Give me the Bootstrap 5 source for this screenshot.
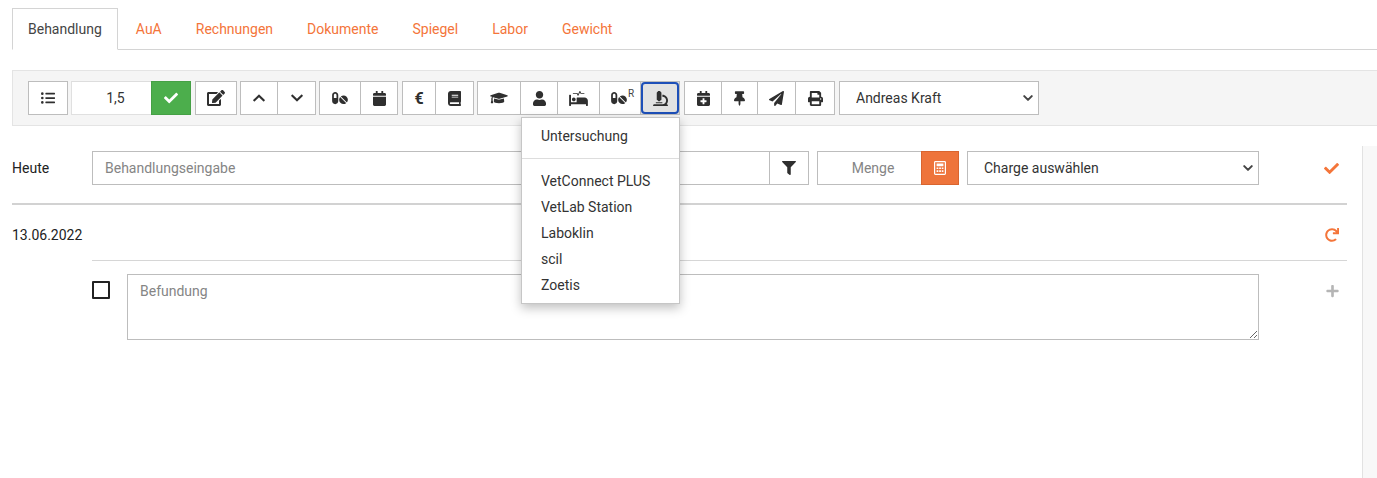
<!DOCTYPE html>
<html lang="de">
<head>
<meta charset="UTF-8">
<meta name="viewport" content="width=device-width, initial-scale=1.0">
<title>Behandlung</title>
<link href="https://cdn.jsdelivr.net/npm/bootstrap@5.3.3/dist/css/bootstrap.min.css" rel="stylesheet">
<style>
body { font-family: Roboto, "Liberation Sans", sans-serif; font-size: 14px; color: #333; overflow: hidden; background: #fff; }
svg { fill: currentColor; display: block; }
.page-wrap { height: 478px; display: flex; flex-direction: column; padding-left: 12px; padding-top: 8px; }

.nav-tabs { border-bottom: 1px solid #d4d4d4; height: 42px; }
.nav-tabs .nav-link { color: #f4753a; padding: 0 16px; line-height: 41px; height: 42px; border-radius: 0; border: 1px solid transparent; margin: 0; }
.nav-tabs .nav-link.active { color: #444; border-color: #d4d4d4 #d4d4d4 #fff; padding: 0 15px; margin-right: 1px; }

.tool-panel { margin-top: 20px; height: 56px; background: #f5f5f5; border: 1px solid #e4e4e4; border-right: 0; padding: 10px 15px; display: flex; gap: 3px; }
.tb-btn { height: 34px; padding: 0; border: 1px solid #bdbdbd; border-radius: 0 !important; background: #fff; color: #2f2f2f; display: flex; align-items: center; justify-content: center; }
.tb-btn:hover { background: #fff; border-color: #bdbdbd; color: #2f2f2f; }
.btn-group .tb-btn { flex: none; }
.tb-btn.is-open { background: #e2e2e2; position: relative; z-index: 2; }
.tb-btn.is-open::after { content: ""; position: absolute; inset: 0; border: 2px solid #1d4fb8; border-radius: 4px; }
.input-group > .tb-amount { width: 81px; height: 34px; text-align: center; border: 1px solid #e0e0e0; border-top-color: #ddd; border-radius: 0; font-size: 14px; padding: 0 0 0 8px; color: #333; flex: none; }
.tb-ok { width: 40px; height: 34px; background: #4cae4c; border: 1px solid #45a045; color: #fff; border-radius: 0; padding: 0; display: flex; align-items: center; justify-content: center; }
.tb-ok:hover { background: #4cae4c; border-color: #45a045; color: #fff; }
.ms-1px { margin-left: 1px; }
.sel-plain { height: 34px; border: 1px solid #bdbdbd; border-radius: 0; font-size: 14px; color: #333; padding: 0 28px 0 16px; background-image: url("data:image/svg+xml,%3csvg xmlns='http://www.w3.org/2000/svg' viewBox='0 0 16 16'%3e%3cpath fill='none' stroke='%23444' stroke-linecap='round' stroke-linejoin='round' stroke-width='3.2' d='m2 5 6 6 6-6'/%3e%3c/svg%3e"); background-size: 10px 10px; background-position: right 5px center; }
.sel-doctor { width: 200px; margin-left: 1px; }

.lab-menu-anchor { position: relative; }
.lab-menu { display: block; position: absolute; top: 36px; left: -120px; margin: 0; width: 159px; padding: 5px 0 5px; min-width: 0; border: 1px solid #c6c6c6; border-radius: 0; box-shadow: 0 4px 10px rgba(0,0,0,.25); font-size: 14px; z-index: 5; }
.lab-menu .dropdown-item { padding: 0 19px; line-height: 26px; color: #333; }
.lab-menu .dropdown-divider { margin: 9px 0 9px; border-color: #ddd; opacity: 1; }

.body-split { flex: 1; display: flex; min-height: 0; margin-top: 20px; gap: 15px; }
.content-col { width: 1335px; padding-top: 5px; }
.side-strip { width: 15px; background: #f8f8f8; border-left: 1px solid #e2e2e2; }

.entry-row { display: flex; align-items: center; height: 34px; }
.day-label { width: 80px; flex: none; color: #222; }
.field-plain { height: 34px; border: 1px solid #bdbdbd; border-radius: 0; font-size: 14px; padding: 0 12px; color: #333; }
.field-plain::placeholder, .note-area::placeholder { color: #858585; opacity: 1; }
.entry-main { width: 717px; flex: none; }
.entry-qty { width: 142px; flex: none; margin-left: 8px; }
.input-group > .qty-input { text-align: center; width: 105px; flex: none; border-right: 0; padding-left: 18px; }
.calc-btn { width: 38px; height: 34px; background: #ee743b; border: 1px solid #d9652f; border-radius: 0; color: #fff; padding: 0; display: flex; align-items: center; justify-content: center; }
.calc-btn:hover { background: #ee743b; border-color: #d9652f; color: #fff; }
.sel-charge { width: 292px; margin-left: 8px; flex: none; }
.filter-btn { width: 40px; margin-left: -1px; }
.row-icon { flex: 1; display: flex; justify-content: flex-end; padding-right: 8px; color: #f4753a; }
.row-icon.muted-icon { color: #b5b5b5; }

.thick-rule { height: 2px; margin: 18px 0 0; background: #d2d2d2; }
.date-row { display: flex; align-items: center; height: 55px; padding-top: 5px; }
.date-label { color: #222; }
.thin-rule { height: 1px; margin-left: 80px; background: #d6d6d6; }
.note-row { display: flex; margin: 13px 0 0 80px; }
.form-check-input.note-check { width: 18px; height: 18px; margin: 7px 17px 0 0; border: 2px solid #222; border-radius: 1px; flex: none; }
.note-area { width: 1132px; height: 66px; flex: none; border: 1px solid #bdbdbd; border-radius: 0; font-size: 14px; padding: 6px 12px; color: #333; }
.note-area:focus, .field-plain:focus { box-shadow: none; border-color: #bdbdbd; }
.note-icon { padding-top: 10px; align-items: flex-start; }
.rx-btn { padding-left: 5px; }
.sup-r { font-size: 10px; line-height: 1; margin: -8px 0 0 1px; color: #444; }
.euro-sign { font-size: 16px; font-weight: 700; padding-top: 1px; }
</style>
</head>
<body>
<div class="page-wrap">
  <ul class="nav nav-tabs">
    <li class="nav-item"><a class="nav-link active" href="#">Behandlung</a></li>
    <li class="nav-item"><a class="nav-link" href="#">AuA</a></li>
    <li class="nav-item"><a class="nav-link" href="#">Rechnungen</a></li>
    <li class="nav-item"><a class="nav-link" href="#">Dokumente</a></li>
    <li class="nav-item"><a class="nav-link" href="#">Spiegel</a></li>
    <li class="nav-item"><a class="nav-link" href="#">Labor</a></li>
    <li class="nav-item"><a class="nav-link" href="#">Gewicht</a></li>
  </ul>

  <div class="tool-panel">
    <button class="btn tb-btn" style="width:40px" type="button" aria-label="Liste">
      <svg width="14" height="14" viewBox="0 0 512 512"><path d="M48 48a48 48 0 1 0 48 48 48 48 0 0 0-48-48zm0 160a48 48 0 1 0 48 48 48 48 0 0 0-48-48zm0 160a48 48 0 1 0 48 48 48 48 0 0 0-48-48zm448 16H176a16 16 0 0 0-16 16v32a16 16 0 0 0 16 16h320a16 16 0 0 0 16-16v-32a16 16 0 0 0-16-16zm0-320H176a16 16 0 0 0-16 16v32a16 16 0 0 0 16 16h320a16 16 0 0 0 16-16V80a16 16 0 0 0-16-16zm0 160H176a16 16 0 0 0-16 16v32a16 16 0 0 0 16 16h320a16 16 0 0 0 16-16v-32a16 16 0 0 0-16-16z"/></svg>
    </button>
    <div class="input-group w-auto flex-nowrap">
      <input class="form-control tb-amount" type="text" value="1,5">
      <button class="btn tb-ok" type="button" aria-label="OK" style="margin-left:-1px">
        <svg width="14" height="14" viewBox="0 0 512 512"><path d="M173.898 439.404l-166.4-166.4c-9.997-9.997-9.997-26.206 0-36.204l36.203-36.204c9.997-9.998 26.207-9.998 36.204 0L192 312.69 432.095 72.596c9.997-9.997 26.207-9.997 36.204 0l36.203 36.204c9.997 9.997 9.997 26.206 0 36.204l-294.4 294.401c-9.998 9.997-26.207 9.997-36.204-.001z"/></svg>
      </button>
    </div>
    <button class="btn tb-btn ms-1px" style="width:42px" type="button" aria-label="Bearbeiten">
      <svg width="18" height="16" viewBox="0 0 576 512"><path d="M402.6 83.2l90.2 90.2c3.8 3.8 3.8 10 0 13.8L274.4 405.6l-92.8 10.3c-12.4 1.4-22.9-9.1-21.5-21.5l10.3-92.8L388.8 83.2c3.8-3.8 10-3.8 13.8 0zm162-22.9l-48.8-48.8c-15.2-15.2-39.9-15.2-55.2 0l-35.4 35.4c-3.8 3.8-3.8 10 0 13.8l90.2 90.2c3.8 3.8 10 3.8 13.8 0l35.4-35.4c15.2-15.3 15.2-40 0-55.2zM384 346.2V448H64V128h229.8c3.2 0 6.2-1.3 8.5-3.5l40-40c7.6-7.6 2.2-20.5-8.5-20.5H48C21.5 64 0 85.5 0 112v352c0 26.5 21.5 48 48 48h352c26.5 0 48-21.5 48-48V306.2c0-10.7-12.9-16-20.5-8.5l-40 40c-2.2 2.3-3.5 5.3-3.5 8.5z"/></svg>
    </button>
    <div class="btn-group">
      <button class="btn tb-btn" style="width:38px" type="button" aria-label="Hoch">
        <svg width="12" height="14" viewBox="0 0 448 512"><path d="M240.971 130.524l194.343 194.343c9.373 9.373 9.373 24.569 0 33.941l-22.667 22.667c-9.357 9.357-24.522 9.375-33.901.04L224 227.495 69.255 381.516c-9.379 9.335-24.544 9.317-33.901-.04l-22.667-22.667c-9.373-9.373-9.373-24.569 0-33.941L207.03 130.525c9.372-9.373 24.568-9.373 33.941-.001z"/></svg>
      </button>
      <button class="btn tb-btn" style="width:39px" type="button" aria-label="Runter">
        <svg width="12" height="14" viewBox="0 0 448 512"><path d="M207.029 381.476L12.686 187.132c-9.373-9.373-9.373-24.569 0-33.941l22.667-22.667c9.357-9.357 24.522-9.375 33.901-.04L224 284.505l154.745-154.021c9.379-9.335 24.544-9.317 33.901.04l22.667 22.667c9.373 9.373 9.373 24.569 0 33.941L240.971 381.476c-9.373 9.372-24.569 9.372-33.942 0z"/></svg>
      </button>
    </div>
    <div class="btn-group">
      <button class="btn tb-btn" style="width:42px" type="button" aria-label="Medikamente">
        <svg width="16" height="14" viewBox="0 0 576 512"><path d="M112 32C50.1 32 0 82.1 0 144v224c0 61.9 50.1 112 112 112s112-50.1 112-112V144c0-61.9-50.1-112-112-112zm48 224H64V144c0-26.5 21.5-48 48-48s48 21.5 48 48v112zm139.7-29.7c-3.5-3.5-9.4-3.1-12.3.8-45.3 62.5-40.4 150.1 15.9 206.4 56.3 56.3 143.9 61.2 206.4 15.9 4-2.9 4.3-8.8.8-12.3L299.7 226.3zm229.8-19c-56.3-56.3-143.9-61.2-206.4-15.9-4 2.9-4.3 8.8-.8 12.3l210.8 210.8c3.5 3.5 9.4 3.1 12.3-.8 45.3-62.4 40.5-150.1-15.9-206.4z"/></svg>
      </button>
      <button class="btn tb-btn" style="width:38px" type="button" aria-label="Kalender">
        <svg width="13" height="15" viewBox="0 0 448 512"><path d="M12 192h424c6.6 0 12 5.4 12 12v260c0 26.5-21.5 48-48 48H48c-26.5 0-48-21.5-48-48V204c0-6.6 5.4-12 12-12zm436-44v-36c0-26.5-21.5-48-48-48h-48V12c0-6.6-5.4-12-12-12h-40c-6.6 0-12 5.4-12 12v52H160V12c0-6.6-5.4-12-12-12h-40c-6.6 0-12 5.4-12 12v52H48C21.5 64 0 85.5 0 112v36c0 6.6 5.4 12 12 12h424c6.6 0 12-5.4 12-12z"/></svg>
      </button>
    </div>
    <div class="btn-group ms-1px">
      <button class="btn tb-btn euro-sign" style="width:34px" type="button">€</button>
      <button class="btn tb-btn" style="width:39px" type="button" aria-label="Buch">
        <svg width="13" height="15" viewBox="0 0 448 512"><path d="M448 360V24c0-13.3-10.7-24-24-24H96C43 0 0 43 0 96v320c0 53 43 96 96 96h328c13.3 0 24-10.7 24-24v-16c0-7.5-3.5-14.3-8.9-18.7-4.2-15.4-4.2-59.3 0-74.7 5.4-4.3 8.9-11.1 8.9-18.6zM128 134c0-3.3 2.7-6 6-6h212c3.3 0 6 2.7 6 6v20c0 3.3-2.7 6-6 6H134c-3.3 0-6-2.7-6-6v-20zm0 64c0-3.3 2.7-6 6-6h212c3.3 0 6 2.7 6 6v20c0 3.3-2.7 6-6 6H134c-3.3 0-6-2.7-6-6v-20zm253.4 250H96c-17.7 0-32-14.3-32-32 0-17.6 14.4-32 32-32h285.4c-1.9 17.1-1.9 46.9 0 64z"/></svg>
      </button>
    </div>
    <div class="btn-group">
      <button class="btn tb-btn" style="width:44px" type="button" aria-label="Ausbildung">
        <svg width="18" height="14" viewBox="0 0 640 512"><path d="M622.34 153.2L343.4 67.5c-15.2-4.67-31.6-4.67-46.79 0L17.66 153.2c-23.54 7.23-23.54 38.36 0 45.59l48.63 14.94c-10.67 13.19-17.23 29.28-17.88 46.9C38.78 266.15 32 276.11 32 288c0 10.78 5.68 19.85 13.86 25.65L20.33 428.53C18.11 438.52 25.71 448 35.94 448h56.11c10.24 0 17.84-9.48 15.62-19.47L82.14 313.65C90.32 307.85 96 298.78 96 288c0-11.57-6.47-21.25-15.66-26.87.76-15.02 8.44-28.3 20.69-36.72L296.6 284.5c9.06 2.78 26.44 6.25 46.79 0l278.95-85.7c23.55-7.24 23.55-38.36 0-45.6zM352.79 315.09c-28.53 8.76-52.84 3.92-65.59 0l-145.02-44.55L128 384c0 35.35 85.96 64 192 64s192-28.65 192-64l-14.18-113.47-145.03 44.56z"/></svg>
      </button>
      <button class="btn tb-btn" style="width:38px" type="button" aria-label="Person">
        <svg width="13" height="15" viewBox="0 0 448 512"><path d="M224 256c70.7 0 128-57.3 128-128S294.7 0 224 0 96 57.3 96 128s57.3 128 128 128zm89.6 32h-16.7c-22.2 10.2-46.9 16-72.9 16s-50.6-5.8-72.9-16h-16.7C60.2 288 0 348.2 0 422.4V464c0 26.5 21.5 48 48 48h352c26.5 0 48-21.5 48-48v-41.6c0-74.2-60.2-134.4-134.4-134.4z"/></svg>
      </button>
      <button class="btn tb-btn" style="width:43px" type="button" aria-label="Station">
        <svg width="19" height="15" viewBox="0 0 640 512"><path d="M528 224H272c-8.8 0-16 7.2-16 16v144H64V144c0-8.8-7.2-16-16-16H16c-8.8 0-16 7.2-16 16v352c0 8.8 7.2 16 16 16h32c8.8 0 16-7.2 16-16v-48h512v48c0 8.8 7.2 16 16 16h32c8.8 0 16-7.2 16-16V336c0-61.9-50.1-112-112-112zM136 96h126.1l27.6 55.2c5.9 11.8 22.7 11.8 28.6 0L368 51.8 390.1 96H512c8.8 0 16-7.2 16-16s-7.2-16-16-16H409.9L382.3 8.8C376.4-3 359.6-3 353.7 8.8L304 108.2l-19.9-39.8c-1.4-2.7-4.1-4.4-7.2-4.4H136c-4.4 0-8 3.6-8 8v16c0 4.4 3.6 8 8 8zm24 256c35.3 0 64-28.7 64-64s-28.7-64-64-64-64 28.7-64 64 28.7 64 64 64z"/></svg>
      </button>
      <button class="btn tb-btn rx-btn" style="width:42px" type="button" aria-label="Rezept">
        <svg width="16" height="14" viewBox="0 0 576 512"><path d="M112 32C50.1 32 0 82.1 0 144v224c0 61.9 50.1 112 112 112s112-50.1 112-112V144c0-61.9-50.1-112-112-112zm48 224H64V144c0-26.5 21.5-48 48-48s48 21.5 48 48v112zm139.7-29.7c-3.5-3.5-9.4-3.1-12.3.8-45.3 62.5-40.4 150.1 15.9 206.4 56.3 56.3 143.9 61.2 206.4 15.9 4-2.9 4.3-8.8.8-12.3L299.7 226.3zm229.8-19c-56.3-56.3-143.9-61.2-206.4-15.9-4 2.9-4.3 8.8-.8 12.3l210.8 210.8c3.5 3.5 9.4 3.1 12.3-.8 45.3-62.4 40.5-150.1-15.9-206.4z"/></svg>
        <span class="sup-r">R</span>
      </button>
      <div class="lab-menu-anchor">
        <button class="btn tb-btn is-open" style="width:40px;margin-left:-1px" type="button" aria-label="Labor">
          <svg width="15" height="15" viewBox="0 0 512 512"><path d="M160 320h12v16c0 8.84 7.16 16 16 16h40c8.84 0 16-7.16 16-16v-16h12c17.67 0 32-14.33 32-32V64c0-17.67-14.33-32-32-32V16c0-8.84-7.16-16-16-16h-64c-8.84 0-16 7.16-16 16v16c-17.67 0-32 14.33-32 32v224c0 17.67 14.33 32 32 32zm304 128h-1.29C493.24 413.99 512 369.2 512 320c0-105.88-86.12-192-192-192v64c70.58 0 128 57.42 128 128s-57.42 128-128 128H48c-26.51 0-48 21.49-48 48 0 8.84 7.16 16 16 16h480c8.84 0 16-7.16 16-16 0-26.51-21.49-48-48-48zm-360-32h208c4.42 0 8-3.58 8-8v-16c0-4.42-3.58-8-8-8H104c-4.42 0-8 3.58-8 8v16c0 4.42 3.58 8 8 8z"/></svg>
        </button>
        <ul class="dropdown-menu lab-menu">
          <li><a class="dropdown-item" href="#">Untersuchung</a></li>
          <li><hr class="dropdown-divider"></li>
          <li><a class="dropdown-item" href="#">VetConnect PLUS</a></li>
          <li><a class="dropdown-item" href="#">VetLab Station</a></li>
          <li><a class="dropdown-item" href="#">Laboklin</a></li>
          <li><a class="dropdown-item" href="#">scil</a></li>
          <li><a class="dropdown-item" href="#">Zoetis</a></li>
        </ul>
      </div>
    </div>
    <div class="btn-group ms-1px">
      <button class="btn tb-btn" style="width:38px" type="button" aria-label="Termin">
        <svg width="13" height="15" viewBox="0 0 448 512"><path d="M436 160H12c-6.6 0-12-5.4-12-12v-36c0-26.5 21.5-48 48-48h48V12c0-6.6 5.4-12 12-12h40c6.6 0 12 5.4 12 12v52h128V12c0-6.6 5.4-12 12-12h40c6.6 0 12 5.4 12 12v52h48c26.5 0 48 21.5 48 48v36c0 6.6-5.4 12-12 12zM12 192h424c6.6 0 12 5.4 12 12v260c0 26.5-21.5 48-48 48H48c-26.5 0-48-21.5-48-48V204c0-6.6 5.4-12 12-12zm316 140c0-6.6-5.4-12-12-12h-60v-60c0-6.6-5.4-12-12-12h-40c-6.6 0-12 5.4-12 12v60h-60c-6.6 0-12 5.4-12 12v40c0 6.6 5.4 12 12 12h60v60c0 6.6 5.4 12 12 12h40c6.6 0 12-5.4 12-12v-60h60c6.6 0 12-5.4 12-12v-40z"/></svg>
      </button>
      <button class="btn tb-btn" style="width:37px" type="button" aria-label="Anheften">
        <svg width="11" height="15" viewBox="0 0 384 512"><path d="M298.028 214.267L285.793 96H328c13.255 0 24-10.745 24-24V24c0-13.255-10.745-24-24-24H56C42.745 0 32 10.745 32 24v48c0 13.255 10.745 24 24 24h42.207L85.972 214.267C37.465 236.82 0 277.261 0 328c0 13.255 10.745 24 24 24h136v104.007c0 1.242.289 2.467.845 3.578l24 48c2.941 5.882 11.364 5.893 14.311 0l24-48a8.008 8.008 0 0 0 .845-3.578V352h136c13.255 0 24-10.745 24-24-.001-51.183-37.983-91.42-85.973-113.733z"/></svg>
      </button>
      <button class="btn tb-btn" style="width:39px" type="button" aria-label="Senden">
        <svg width="15" height="15" viewBox="0 0 512 512"><path d="M476 3.2L12.5 270.6c-18.1 10.4-15.8 35.6 2.2 43.2L121 358.4l287.3-253.2c5.5-4.9 13.3 2.6 8.6 8.3L176 407v80.5c0 23.6 28.5 32.9 42.5 15.8L282 426l124.6 52.2c14.2 6 30.4-2.9 33-18.2l72-432C515 7.8 493.3-6.8 476 3.2z"/></svg>
      </button>
      <button class="btn tb-btn" style="width:40px" type="button" aria-label="Drucken">
        <svg width="15" height="15" viewBox="0 0 512 512"><path d="M448 192V77.25c0-8.49-3.37-16.62-9.37-22.63L393.37 9.37c-6-6-14.14-9.37-22.63-9.37H96C78.33 0 64 14.33 64 32v160c-35.35 0-64 28.65-64 64v112c0 8.84 7.16 16 16 16h48v96c0 17.67 14.33 32 32 32h320c17.67 0 32-14.33 32-32v-96h48c8.84 0 16-7.16 16-16V256c0-35.35-28.65-64-64-64zm-64 256H128v-96h256v96zm0-224H128V64h192v48c0 8.84 7.16 16 16 16h48v96zm48 72c-13.25 0-24-10.75-24-24 0-13.26 10.75-24 24-24s24 10.74 24 24c0 13.25-10.75 24-24 24z"/></svg>
      </button>
    </div>
    <select class="form-select sel-plain sel-doctor"><option>Andreas Kraft</option></select>
  </div>

  <div class="body-split">
    <div class="content-col">
      <div class="entry-row">
        <div class="day-label">Heute</div>
        <div class="input-group entry-main flex-nowrap">
          <input class="form-control field-plain" type="text" placeholder="Behandlungseingabe">
          <button class="btn tb-btn filter-btn" type="button" aria-label="Filter">
            <svg width="14" height="14" viewBox="0 0 512 512"><path d="M487.976 0H24.028C2.71 0-8.047 25.866 7.058 40.971L192 225.941V432c0 7.831 3.821 15.17 10.237 19.662l80 55.98C298.02 518.69 320 507.493 320 487.98V225.941l184.947-184.97C520.021 25.896 509.338 0 487.976 0z"/></svg>
          </button>
        </div>
        <div class="input-group entry-qty flex-nowrap">
          <input class="form-control field-plain qty-input" type="text" placeholder="Menge">
          <button class="btn calc-btn" type="button" aria-label="Rechner">
            <svg width="12" height="14" viewBox="0 0 13 15"><path fill-rule="evenodd" d="M1.5 0h10A1.5 1.5 0 0 1 13 1.5v12a1.5 1.5 0 0 1-1.5 1.5h-10A1.5 1.5 0 0 1 0 13.5v-12A1.5 1.5 0 0 1 1.5 0zM1.3 1.3v12.4h10.4V1.3zM2.8 2.6h7.4v3H2.8zM2.8 7h1.9v1.7H2.8zm2.8 0h1.9v1.7H5.6zm2.8 0h1.8v1.7H8.4zM2.8 10h1.9v1.9H2.8zm2.8 0h1.9v1.9H5.6zm2.8 0h1.8v1.9H8.4z"/></svg>
          </button>
        </div>
        <select class="form-select sel-plain sel-charge"><option>Charge auswählen</option></select>
        <div class="row-icon">
          <svg width="15" height="15" viewBox="0 0 512 512"><path d="M173.898 439.404l-166.4-166.4c-9.997-9.997-9.997-26.206 0-36.204l36.203-36.204c9.997-9.998 26.207-9.998 36.204 0L192 312.69 432.095 72.596c9.997-9.997 26.207-9.997 36.204 0l36.203 36.204c9.997 9.997 9.997 26.206 0 36.204l-294.4 294.401c-9.998 9.997-26.207 9.997-36.204-.001z"/></svg>
        </div>
      </div>
      <div class="thick-rule"></div>
      <div class="date-row">
        <div class="date-label">13.06.2022</div>
        <div class="row-icon">
          <svg width="14" height="14" viewBox="0 0 512 512"><path d="M500.33 0h-47.41a12 12 0 0 0-12 12.57l4 82.76A247.42 247.42 0 0 0 256 8C119.34 8 7.9 119.53 8 256.19 8.1 393.07 119.1 504 256 504a247.1 247.1 0 0 0 166.18-63.91 12 12 0 0 0 .48-17.43l-34-34a12 12 0 0 0-16.38-.55A176 176 0 1 1 402.1 157.8l-101.53-4.87a12 12 0 0 0-12.57 12v47.41a12 12 0 0 0 12 12h200.33a12 12 0 0 0 12-12V12a12 12 0 0 0-12-12z"/></svg>
        </div>
      </div>
      <div class="thin-rule"></div>
      <div class="note-row">
        <input class="form-check-input note-check" type="checkbox" aria-label="Auswahl">
        <textarea class="form-control note-area" placeholder="Befundung"></textarea>
        <div class="row-icon muted-icon note-icon">
          <svg width="13" height="14" viewBox="0 0 448 512"><path d="M416 208H272V64c0-17.67-14.33-32-32-32h-32c-17.67 0-32 14.33-32 32v144H32c-17.67 0-32 14.33-32 32v32c0 17.67 14.33 32 32 32h144v144c0 17.67 14.33 32 32 32h32c17.67 0 32-14.33 32-32V304h144c17.67 0 32-14.33 32-32v-32c0-17.67-14.33-32-32-32z"/></svg>
        </div>
      </div>
    </div>
    <div class="side-strip"></div>
  </div>
</div>
</body>
</html>
